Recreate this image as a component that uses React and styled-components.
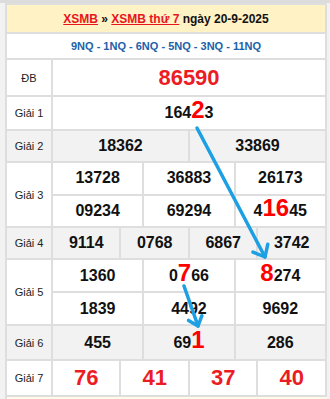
import React from 'react';
import styled, { createGlobalStyle } from 'styled-components';

const GlobalStyle = createGlobalStyle`
    body {
        margin: 0;
        background: #f2f2f2;
        font-family: "Liberation Sans", Arial, sans-serif;
    }
`

const prizes = [
    { label: 'Giải 1', h: 34, lines: [['164[2]3']] },
    { label: 'Giải 2', h: 32, alt: true, lines: [['18362', '33869']] },
    { label: 'Giải 3', h: 32.5, lines: [['13728', '36883', '26173'], ['09234', '69294', '4[16]45']] },
    { label: 'Giải 4', h: 32, alt: true, lines: [['9114', '0768', '6867', '3742']] },
    { label: 'Giải 5', h: 33, lines: [['1360', '0[7]66', '[8]274'], ['1839', '4492', '9692']] },
    { label: 'Giải 6', h: 35, alt: true, lines: [['455', '69[1]', '286']] },
];

const giai7 = ['76', '41', '37', '40'];

// "[x]" -> chữ số đỏ to
function SoKetQua({ value }) {
    const parts = value.split(/(\[[^\]]+\])/).filter(Boolean);
    return parts.map((p, i) =>
        p.startsWith('[')
            ? <Hi key={i}>{p.slice(1, -1)}</Hi>
            : <React.Fragment key={i}>{p}</React.Fragment>
    );
}

function Arrow({ x1, y1, x2, y2, wing = 12 }) {
    const len = Math.hypot(x2 - x1, y2 - y1);
    const bx = (x1 - x2) / len;
    const by = (y1 - y2) / len;
    const c = Math.cos(0.7);
    const s = Math.sin(0.7);
    const w1 = [x2 + wing * (bx * c - by * s), y2 + wing * (bx * s + by * c)];
    const w2 = [x2 + wing * (bx * c + by * s), y2 + wing * (-bx * s + by * c)];
    return (
        <g>
            <line x1={x1} y1={y1} x2={x2} y2={y2} />
            <polyline points={`${w1[0]},${w1[1]} ${x2},${y2} ${w2[0]},${w2[1]}`} />
        </g>
    );
}

export default function App() {
    return (
        <>
            <GlobalStyle />
            <Page>
                <TopStrip />
                <Bang>
                    <colgroup>
                        <col style={{ width: 46 }} />
                        {Array.from({ length: 12 }).map((_, i) => <col key={i} />)}
                    </colgroup>
                    <tbody>
                        <Row $h={29}>
                            <Header colSpan={13}>
                                <Link>XSMB</Link> » <Link>XSMB thứ 7</Link> ngày 20-9-2025
                            </Header>
                        </Row>
                        <Row $h={26}>
                            <Ma colSpan={13}>9NQ - 1NQ - 6NQ - 5NQ - 3NQ - 11NQ</Ma>
                        </Row>
                        <Row $h={37}>
                            <Label>ĐB</Label>
                            <Cell colSpan={12}><DacBiet>86590</DacBiet></Cell>
                        </Row>
                        {prizes.map((g) =>
                            g.lines.map((line, li) =>
                                <Row key={g.label + li} $h={g.h} $alt={g.alt}>
                                    {li === 0 && <Label rowSpan={g.lines.length}>{g.label}</Label>}
                                    {line.map((v, i) =>
                                        <Cell key={i} colSpan={12 / line.length}>
                                            <SoKetQua value={v} />
                                        </Cell>
                                    )}
                                </Row>
                            )
                        )}
                        <Row $h={36}>
                            <Label>Giải 7</Label>
                            {giai7.map((v) =>
                                <Cell key={v} colSpan={3}><So7>{v}</So7></Cell>
                            )}
                        </Row>
                    </tbody>
                </Bang>
                <Next />
                <Arrows viewBox="0 0 330 399">
                    <Arrow x1={197} y1={128} x2={265} y2={257} wing={13} />
                    <Arrow x1={184} y1={286} x2={198} y2={326} wing={11} />
                </Arrows>
            </Page>
        </>
    );
}

const Page = styled.div`
    position: relative;
    width: 330px;
    height: 399px;
    overflow: hidden;
    padding-left: 5px;
    box-sizing: border-box;
`

const TopStrip = styled.div`
    height: 3px;
    margin-left: -5px;
    background: #dcdcdc;
`

const Bang = styled.table`
    width: 322px;
    table-layout: fixed;
    border-collapse: collapse;
    background: #ffffff;
    border: 2px solid #dedede;

    td {
        border: 2px solid #dedede;
        padding: 0;
        text-align: center;
        vertical-align: middle;
    }
`

const Row = styled.tr`
    height: ${(p) => p.$h}px;
    background: ${(p) => (p.$alt ? '#f2f2f2' : '#ffffff')};
`

const Header = styled.td`
    background: #fff2c4;
    font-size: 12px;
    font-weight: bold;
    color: #111111;
`

const Link = styled.span`
    color: #e8141c;
    text-decoration: underline;
`

const Ma = styled.td`
    font-size: 11px;
    font-weight: bold;
    color: #2161a8;
`

const Label = styled.td`
    font-size: 11px;
    color: #222222;
`

const Cell = styled.td`
    font-size: 16px;
    font-weight: bold;
    color: #111111;
    white-space: nowrap;
`

const DacBiet = styled.span`
    font-size: 22px;
    color: #ec1c24;
`

const So7 = styled.span`
    font-size: 22px;
    color: #ec1c24;
`

const Hi = styled.span`
    font-size: 24px;
    line-height: 0;
    color: #ff0000;
`

const Next = styled.div`
    width: 322px;
    height: 20px;
    background: #fffaea;
    border-left: 2px solid #dedede;
    box-sizing: border-box;
`

const Arrows = styled.svg`
    position: absolute;
    top: 0;
    left: 0;
    width: 330px;
    height: 399px;
    pointer-events: none;
    fill: none;
    stroke: #1d9fe3;
    stroke-width: 3.5;
    stroke-linecap: round;
    stroke-linejoin: round;
`
